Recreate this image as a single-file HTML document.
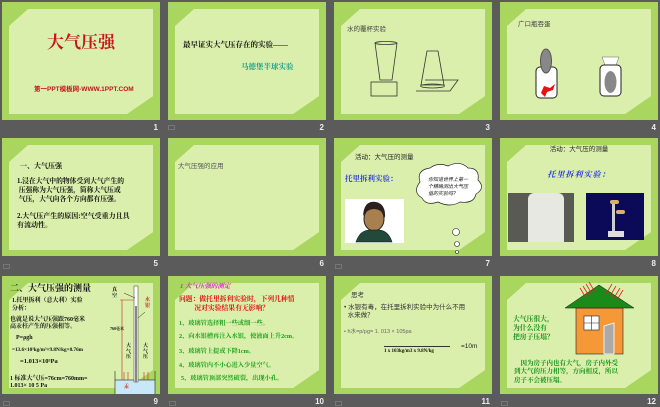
<!DOCTYPE html>
<html><head><meta charset="utf-8">
<style>
*{margin:0;padding:0;box-sizing:border-box}
body{width:660px;height:407px;background:#5b5b5b;position:relative;overflow:hidden;font-family:"Liberation Sans","Noto Sans CJK SC",sans-serif}
.s{position:absolute;width:158px;height:118px;background:#a8d65e}
.in{position:absolute;left:7px;top:7px;width:144px;height:105px;background:#d9efab;clip-path:polygon(19px 0,100% 0,100% 83%,82% 100%,0 100%,0 17px)}
.n{position:absolute;color:#eee;font-size:8px;font-weight:bold;width:20px;text-align:right}
.t{position:absolute;white-space:nowrap;line-height:1.25}
.sf{font-family:"Liberation Serif","Noto Serif CJK SC",serif;font-weight:bold}
.ic{position:absolute;width:7px;height:5px;border:1px solid #888;opacity:.6}
</style></head><body>

<!-- Row 1 -->
<div class="s" style="left:2px;top:2px"><div class="in"></div>
<div class="t sf" style="left:0;width:158px;text-align:center;top:30px;font-size:17px;color:#c8141c">大气压强</div>
<div class="t" style="left:32px;top:84px;font-size:6.5px;color:#c8141c;font-weight:bold">第一PPT模板网-WWW.1PPT.COM</div>
</div>
<div class="n" style="left:138px;top:123px">1</div>

<div class="s" style="left:168px;top:2px"><div class="in"></div>
<div class="t sf" style="left:15px;top:38px;font-size:7.5px;color:#111">最早证实大气压存在的实验——</div>
<div class="t sf" style="left:73px;top:60px;font-size:7.5px;color:#1a9a8a">马德堡半球实验</div>
</div>
<div class="ic" style="left:168px;top:125px"></div>
<div class="n" style="left:304px;top:123px">2</div>

<div class="s" style="left:334px;top:2px"><div class="in"></div>
<div class="t" style="left:13px;top:24px;font-size:6.5px;color:#444">水的覆杯实验</div>
<svg style="position:absolute;left:0;top:0" width="158" height="118" fill="none" stroke="#333" stroke-width="0.8">
<ellipse cx="52" cy="41" rx="11" ry="1.5"/><path d="M41 41 L46 78 L58 78 L63 41"/><rect x="37" y="80" width="26" height="14"/>
<path d="M93 49 L104 49 L110 83 L87 83 Z"/><ellipse cx="98.5" cy="84" rx="12" ry="2"/><path d="M82 89 L116 89 L124 78 L91 78"/>
</svg>
</div>
<div class="n" style="left:470px;top:123px">3</div>

<div class="s" style="left:500px;top:2px"><div class="in"></div>
<div class="t" style="left:18px;top:19px;font-size:6.5px;color:#444">广口瓶吞蛋</div>
<svg style="position:absolute;left:0;top:0" width="158" height="118">
<rect x="36" y="65" width="21" height="31" rx="4" fill="#fff" stroke="#222"/>
<ellipse cx="46" cy="59" rx="5.5" ry="12" fill="#888" stroke="#555"/>
<path d="M41 91 L44 84 L50 86 L55 82 L53 88 L47 90 L45 95 Z" fill="#e81010"/>
<path d="M102 55 L119 55 L116 63 L105 63 Z" fill="#fff" stroke="#666" stroke-width=".5"/>
<rect x="100" y="63" width="21" height="31" rx="4" fill="#fff" stroke="#222"/>
<ellipse cx="110.5" cy="80" rx="6" ry="11" fill="#888"/>
</svg>
</div>
<div class="n" style="left:636px;top:123px">4</div>

<!-- Row 2 -->
<div class="s" style="left:2px;top:138px"><div class="in"></div>
<div class="t sf" style="left:18px;top:24px;font-size:7px;color:#111">一、大气压强</div>
<div class="t sf" style="left:15px;top:39px;font-size:6.8px;color:#111;line-height:1.35">1.浸在大气中的物体受到大气产生的<br>&nbsp;压强称为大气压强，简称大气压或<br>&nbsp;气压，大气向各个方向都有压强。</div>
<div class="t sf" style="left:15px;top:74px;font-size:7px;color:#111;line-height:1.35">2.大气压产生的原因:空气受重力且具<br>有流动性。</div>
</div>
<div class="ic" style="left:3px;top:264px"></div>
<div class="n" style="left:138px;top:259px">5</div>

<div class="s" style="left:168px;top:138px"><div class="in"></div>
<div class="t" style="left:10px;top:25px;font-size:6.5px;color:#555">大气压强的应用</div>
</div>
<div class="n" style="left:304px;top:259px">6</div>

<div class="s" style="left:334px;top:138px"><div class="in"></div>
<div class="t" style="left:21px;top:16px;font-size:6.5px;color:#222">活动：大气压的测量</div>
<div class="t sf" style="left:11px;top:36px;font-size:7.5px;color:#2a3ae0">托里拆利实验：</div>
<div style="position:absolute;left:11px;top:61px;width:59px;height:44px;background:#fff"></div>
<svg style="position:absolute;left:0;top:0" width="158" height="118">
<ellipse cx="40" cy="81" rx="10" ry="12" fill="#a8804e" stroke="#222"/>
<path d="M29 78 Q30 62 42 64 Q52 66 51 80 L48 74 Q40 68 32 74 Z" fill="#2a2020"/>
<path d="M22 104 Q26 92 36 92 L44 92 Q54 92 58 104 Z" fill="#224a3a" stroke="#111" stroke-width=".6"/>
<path d="M86 44 Q82 32 96 30 Q104 24 114 28 Q126 22 134 30 Q146 30 144 42 Q152 50 142 56 Q140 66 126 64 Q116 70 104 64 Q92 68 88 60 Q78 54 86 44 Z" fill="#fff" stroke="#222" stroke-width=".7"/>
<circle cx="122" cy="94" r="3.5" fill="#fff" stroke="#222" stroke-width=".6"/>
<circle cx="123" cy="106" r="2.5" fill="#fff" stroke="#222" stroke-width=".6"/>
<circle cx="123" cy="114" r="1.5" fill="#fff" stroke="#222" stroke-width=".6"/>
</svg>
<div class="t" style="left:94px;top:39px;font-size:5px;color:#111;line-height:1.4;font-style:italic">你知道世界上第一<br>个精确测出大气压<br>值的实验吗?</div>
</div>
<div class="ic" style="left:335px;top:264px"></div>
<div class="n" style="left:470px;top:259px">7</div>

<div class="s" style="left:500px;top:138px"><div class="in"></div>
<div class="t" style="left:0;width:158px;text-align:center;top:8px;font-size:6.5px;color:#222">活动：大气压的测量</div>
<div class="t sf" style="left:0;width:158px;text-align:center;top:32px;font-size:8px;color:#2a3ae0;font-style:italic;letter-spacing:1px">托里拆利实验：</div>
<div style="position:absolute;left:8px;top:55px;width:66px;height:49px;background:#5a5a55"></div>
<div style="position:absolute;left:28px;top:55px;width:36px;height:49px;background:#e8e8e2;border-radius:6px 6px 0 0"></div>
<div style="position:absolute;left:86px;top:55px;width:58px;height:47px;background:#0a0a58"></div>
<div style="position:absolute;left:112px;top:63px;width:3px;height:32px;background:#ccc"></div>
<div style="position:absolute;left:108px;top:93px;width:16px;height:6px;background:#ddd"></div>
<div style="position:absolute;left:110px;top:62px;width:9px;height:4px;background:#d8b070;border-radius:3px"></div>
<div style="position:absolute;left:116px;top:72px;width:9px;height:4px;background:#d8b070;border-radius:3px"></div>
</div>
<div class="n" style="left:636px;top:259px">8</div>

<!-- Row 3 -->
<div class="s" style="left:2px;top:276px"><div class="in"></div>
<div class="t sf" style="left:8px;top:7px;font-size:9px;color:#111">二、大气压强的测量</div>
<div class="t sf" style="left:10px;top:22px;font-size:6px;color:#111;line-height:1.3">1.托里拆利（意大利）实验<br>分析：</div>
<div class="t sf" style="left:8px;top:41px;font-size:6px;color:#111;line-height:1.2">也就是说大气压强跟760毫米<br>高汞柱产生的压强相等。</div>
<div class="t sf" style="left:14px;top:59px;font-size:6px;color:#111">P=ρgh</div>
<div class="t sf" style="left:10px;top:71px;font-size:5.2px;color:#111">=13.6×10³kg/m³×9.8N/kg×0.76m</div>
<div class="t sf" style="left:18px;top:82px;font-size:6.5px;color:#111">=1.013×10⁵Pa</div>
<div class="t sf" style="left:8px;top:100px;font-size:6px;color:#111;line-height:1.2">1 标准大气压=76cm=760mm=<br>1.013× 10 5 Pa</div>
<svg style="position:absolute;left:0;top:0" width="158" height="118">
<rect x="113" y="104" width="40" height="22" fill="#c8e8f8" stroke="#222" stroke-width=".6"/>
<path d="M113 95 L113 104 M153 95 L153 104" stroke="#222" stroke-width=".6"/>
<rect x="132" y="10" width="4" height="96" fill="#fff" stroke="#333" stroke-width=".5"/>
<rect x="133" y="30" width="2" height="76" fill="#888"/>
<path d="M118 24 L132 24 M120 24 L120 104 M122 96 L122 104 M126 96 L126 104 M142 96 L142 104 M146 96 L146 104" stroke="#d02020" stroke-width=".6"/>
<path d="M122 17 L133 22 M136 42 L143 36" stroke="#222" stroke-width=".5"/>
</svg>
<div class="t sf" style="left:110px;top:12px;font-size:5px;color:#111;line-height:1.1">真<br>空</div>
<div class="t sf" style="left:143px;top:22px;font-size:5px;color:#d02020;line-height:1.1">水<br>银</div>
<div class="t sf" style="left:108px;top:50px;font-size:4px;color:#111">760毫米</div>
<div class="t sf" style="left:124px;top:68px;font-size:5px;color:#111;line-height:1.1">大<br>气<br>压</div>
<div class="t sf" style="left:141px;top:68px;font-size:5px;color:#111;line-height:1.1">大<br>气<br>压</div>
<div class="t sf" style="left:122px;top:109px;font-size:5px;color:#d02020">汞</div>
</div>
<div class="ic" style="left:3px;top:401px"></div>
<div class="n" style="left:138px;top:397px">9</div>

<div class="s" style="left:168px;top:276px"><div class="in"></div>
<div class="t sf" style="left:12px;top:7px;font-size:6.5px;color:#e020d0;font-style:italic">1 大气压强的测定</div>
<div class="t sf" style="left:11px;top:19px;font-size:6.8px;color:#e01010;line-height:1.35">问题：做托里拆利实验时，下列几种情<br>&nbsp;&nbsp;&nbsp;&nbsp;&nbsp;&nbsp;&nbsp;&nbsp;&nbsp;况对实验结果有无影响？</div>
<div class="t sf" style="left:11px;top:44px;font-size:6.2px;color:#18a018">1、玻璃管选择粗一些或细一些。</div>
<div class="t sf" style="left:11px;top:57px;font-size:6.2px;color:#18a018">2、向水银槽再注入水银，使液面上升2cm。</div>
<div class="t sf" style="left:11px;top:72px;font-size:6.2px;color:#18a018">3、玻璃管上提或下降1cm。</div>
<div class="t sf" style="left:11px;top:86px;font-size:6.2px;color:#18a018">4、玻璃管内不小心进入少量空气。</div>
<div class="t sf" style="left:13px;top:99px;font-size:6.2px;color:#18a018">5、玻璃管顶部突然破裂，出现小孔。</div>
</div>
<div class="ic" style="left:169px;top:401px"></div>
<div class="n" style="left:304px;top:397px">10</div>

<div class="s" style="left:334px;top:276px"><div class="in"></div>
<div class="t" style="left:17px;top:16px;font-size:6.5px;color:#333">思考</div>
<div class="t" style="left:10px;top:28px;font-size:6.5px;color:#333;line-height:1.3">• 水银有毒，在托里拆利实验中为什么不用<br>&nbsp;&nbsp;水来做？</div>
<div class="t" style="left:10px;top:53px;font-size:5.5px;color:#666">• h水=p/ρg= 1. 013 × 105pa</div>
<div style="position:absolute;left:50px;top:70px;width:66px;height:0;border-top:.7px solid #333"></div>
<div class="t sf" style="left:50px;top:73px;font-size:5px;color:#111">1 x 103kg/m3 x 9.8N/kg</div>
<div class="t" style="left:127px;top:67px;font-size:6.5px;color:#222">=10m</div>
</div>
<div class="ic" style="left:335px;top:401px"></div>
<div class="n" style="left:470px;top:397px">11</div>

<div class="s" style="left:500px;top:276px"><div class="in"></div>
<svg style="position:absolute;left:0;top:0" width="158" height="118">
<rect x="76" y="32" width="47" height="46" fill="#f49838" stroke="#222" stroke-width=".6"/>
<path d="M65 32 L99 9 L134 32 Z" fill="#1a8a1a" stroke="#111" stroke-width=".5"/>
<rect x="84" y="40" width="15" height="14" fill="#fff" stroke="#222" stroke-width=".6"/>
<path d="M91.5 40 V54 M84 47 H99" stroke="#222" stroke-width=".6"/>
<path d="M104 50 L114 47 V78 H104 Z" fill="#aaa" stroke="#fff" stroke-width=".8"/>
<g stroke="#e02020" stroke-width=".8"><path d="M80 12 L86 22 M83 10 L89 20 M86 8 L92 18 M89 6 L95 16 M112 8 L106 18 M116 10 L110 20 M120 12 L114 22 M123 14 L117 24"/></g>
</svg>
<div class="t sf" style="left:13px;top:40px;font-size:6.8px;color:#18901a;line-height:1.3">大气压很大，<br>为什么没有<br>把房子压塌？</div>
<div class="t sf" style="left:14px;top:84px;font-size:6.5px;color:#18901a;line-height:1.3">&nbsp;&nbsp;&nbsp;&nbsp;因为房子内也有大气，房子内外受<br>到大气的压力相等，方向相反，所以<br>房子不会被压塌。</div>
</div>
<div class="ic" style="left:501px;top:401px"></div>
<div class="n" style="left:636px;top:397px">12</div>

</body></html>
